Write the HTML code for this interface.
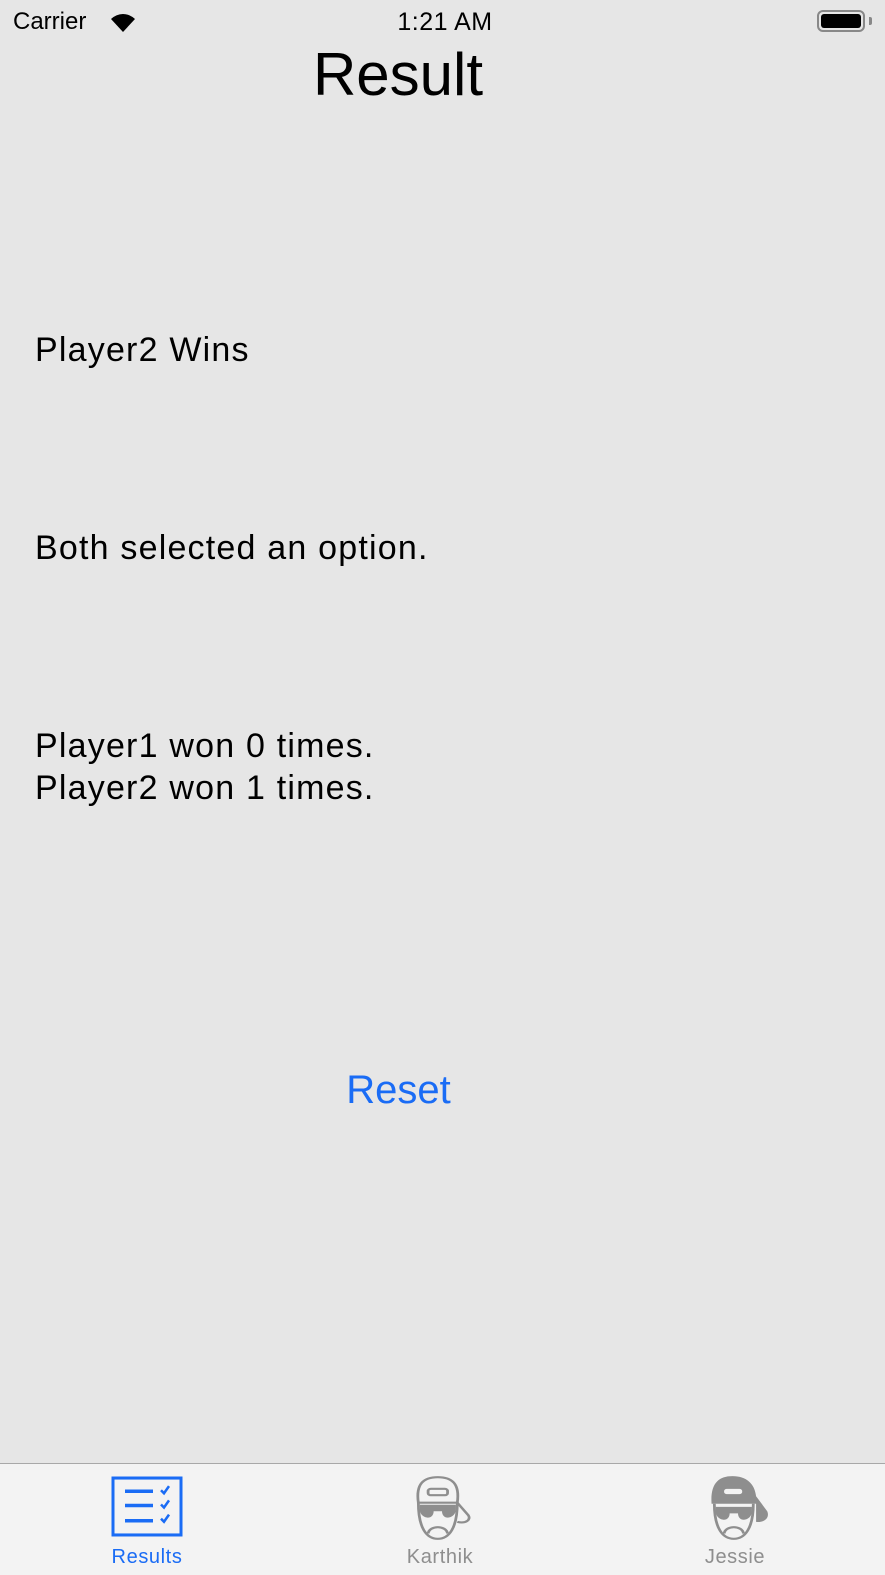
<!DOCTYPE html>
<html><head><meta charset="utf-8"><style>
body{margin:0;width:885px;height:1574px;background:#e6e6e6;font-family:"Liberation Sans",sans-serif;position:relative;overflow:hidden}
.a{position:absolute;white-space:nowrap}
.t{font-size:34px;letter-spacing:1.2px;color:#000;left:35px}
.l{font-size:20px;letter-spacing:0.6px;text-align:center;width:120px;top:1546px}
</style></head><body>
<div class="a" style="left:13px;top:8px;font-size:24px">Carrier</div>
<svg class="a" style="left:108px;top:10px" width="30" height="24" viewBox="0 0 30 24"><path d="M15 22 L3 9 A17 17 0 0 1 27 9 Z" fill="#000"/></svg>
<div class="a" style="left:0;width:890px;text-align:center;top:8px;font-size:25px;letter-spacing:0.5px">1:21 AM</div>
<div class="a" style="left:817px;top:10px;width:48px;height:22px;border:2px solid #888;border-radius:6px;box-sizing:border-box;padding:2px"><div style="background:#000;width:100%;height:100%;border-radius:3px"></div></div>
<div class="a" style="left:869px;top:17px;width:3px;height:8px;background:#888;border-radius:0 2px 2px 0"></div>
<div class="a" style="left:0;width:796px;text-align:center;top:40px;font-size:60px">Result</div>
<div class="a t" style="top:331px">Player2 Wins</div>
<div class="a t" style="top:529px">Both selected an option.</div>
<div class="a t" style="top:725px;line-height:42px">Player1 won 0 times.<br>Player2 won 1 times.</div>
<div class="a" style="left:0;width:797px;text-align:center;top:1068px;font-size:40px;color:#1a6cf5">Reset</div>
<div class="a" style="left:0;top:1463px;width:885px;height:111px;background:#f3f3f3;border-top:1.5px solid #a8a8a8"></div>
<svg class="a" style="left:111px;top:1476px" width="72" height="61" viewBox="0 0 72 60" preserveAspectRatio="none"><rect x="2" y="2" width="68" height="56" fill="none" stroke="#1a6cf5" stroke-width="3"/><g stroke="#1a6cf5" stroke-width="3.5" fill="none"><path d="M14 15h28M14 29h28M14 44h28"/><path d="M50 14l3 3 5-7M50 28l3 3 5-7M50 42l3 3 5-7" stroke-width="2.5"/></g></svg>
<div class="a l" style="left:87px;color:#1a6cf5">Results</div>
<svg class="a" style="left:410px;top:1475px" width="64" height="66" viewBox="0 0 46 62" preserveAspectRatio="none"><g fill="none" stroke="#8e8e8e" stroke-width="2"><path d="M6 26 C4 8 10 2 20 2 C30 2 36 8 34 26Z"/><path d="M6 26 C6 50 12 60 20 60 C28 60 34 50 34 26"/><path d="M34 26 L42 38 C44 42 40 46 34 44"/><rect x="13" y="13" width="14" height="6" rx="2"/><path d="M13 55 C14 47 26 47 27 55"/></g><g fill="#8e8e8e"><path d="M7 28h26v4c0 6-4 8-6 8s-4-2-4-6h-6c0 4-2 6-4 6s-6-2-6-8z"/></g></svg>
<div class="a l" style="left:380px;color:#8e8e8e">Karthik</div>
<svg class="a" style="left:706px;top:1475px" width="64" height="66" viewBox="0 0 46 62" preserveAspectRatio="none"><g fill="#8e8e8e"><path d="M4 27 C3 8 9 1 19 1 C29 1 35 8 36 20 L44 34 C46 40 42 45 36 44 L36 27Z"/><path d="M7 30h26v4c0 6-4 8-6 8s-4-2-4-6h-6c0 4-2 6-4 6s-6-2-6-8z"/></g><rect x="13" y="13" width="13" height="5" rx="2" fill="#f3f3f3"/><g fill="none" stroke="#8e8e8e" stroke-width="2"><path d="M6 27 C6 50 12 60 20 60 C28 60 34 50 34 27"/><path d="M13 55 C14 47 26 47 27 55"/></g></svg>
<div class="a l" style="left:675px;color:#8e8e8e">Jessie</div>
</body></html>
